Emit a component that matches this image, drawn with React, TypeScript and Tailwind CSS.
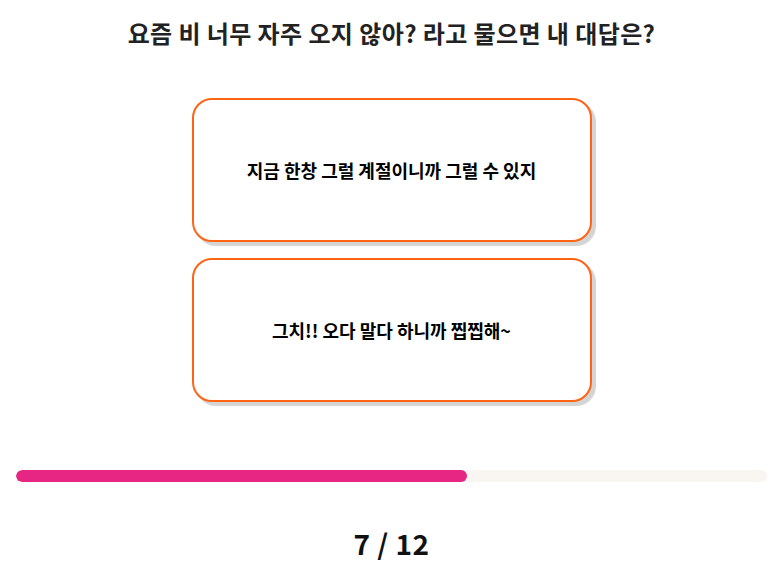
import React from 'react';

const answers = ['지금 한창 그럴 계절이니까 그럴 수 있지', '그치!! 오다 말다 하니까 찝찝해~'];

export default function App() {
  const current = 7;
  const total = 12;

  return (
    <div className="w-[780px] h-[582px] bg-white pl-[3px] flex flex-col items-center font-['Noto_Sans_CJK_KR',sans-serif] text-[#111]">
      <h1 className="mt-[17px] text-[24px] font-bold leading-[32px] tracking-[0.4px] text-[#222]">
        요즘 비 너무 자주 오지 않아? 라고 물으면 내 대답은?
      </h1>

      <div className="mt-[49px] flex flex-col gap-[16px]">
        {answers.map((a) => (
          <button
            key={a}
            className="w-[400px] h-[144px] rounded-[20px] border-2 border-[#ff6314] bg-white shadow-[4px_4px_1px_#d4d4d4] flex items-center justify-center text-[18px] font-bold text-black"
          >
            {a}
          </button>
        ))}
      </div>

      {/* 진행 바 */}
      <div className="mt-[68px] w-[751px] h-[12px] rounded-full bg-[#f9f6f1] overflow-hidden">
        <div className="h-full rounded-full bg-[#e72582]" style={{ width: '60%' }} />
      </div>

      <div className="mt-[45px] text-[28px] font-bold leading-[32px] tracking-[0.5px]">
        {current} / {total}
      </div>
    </div>
  );
}
